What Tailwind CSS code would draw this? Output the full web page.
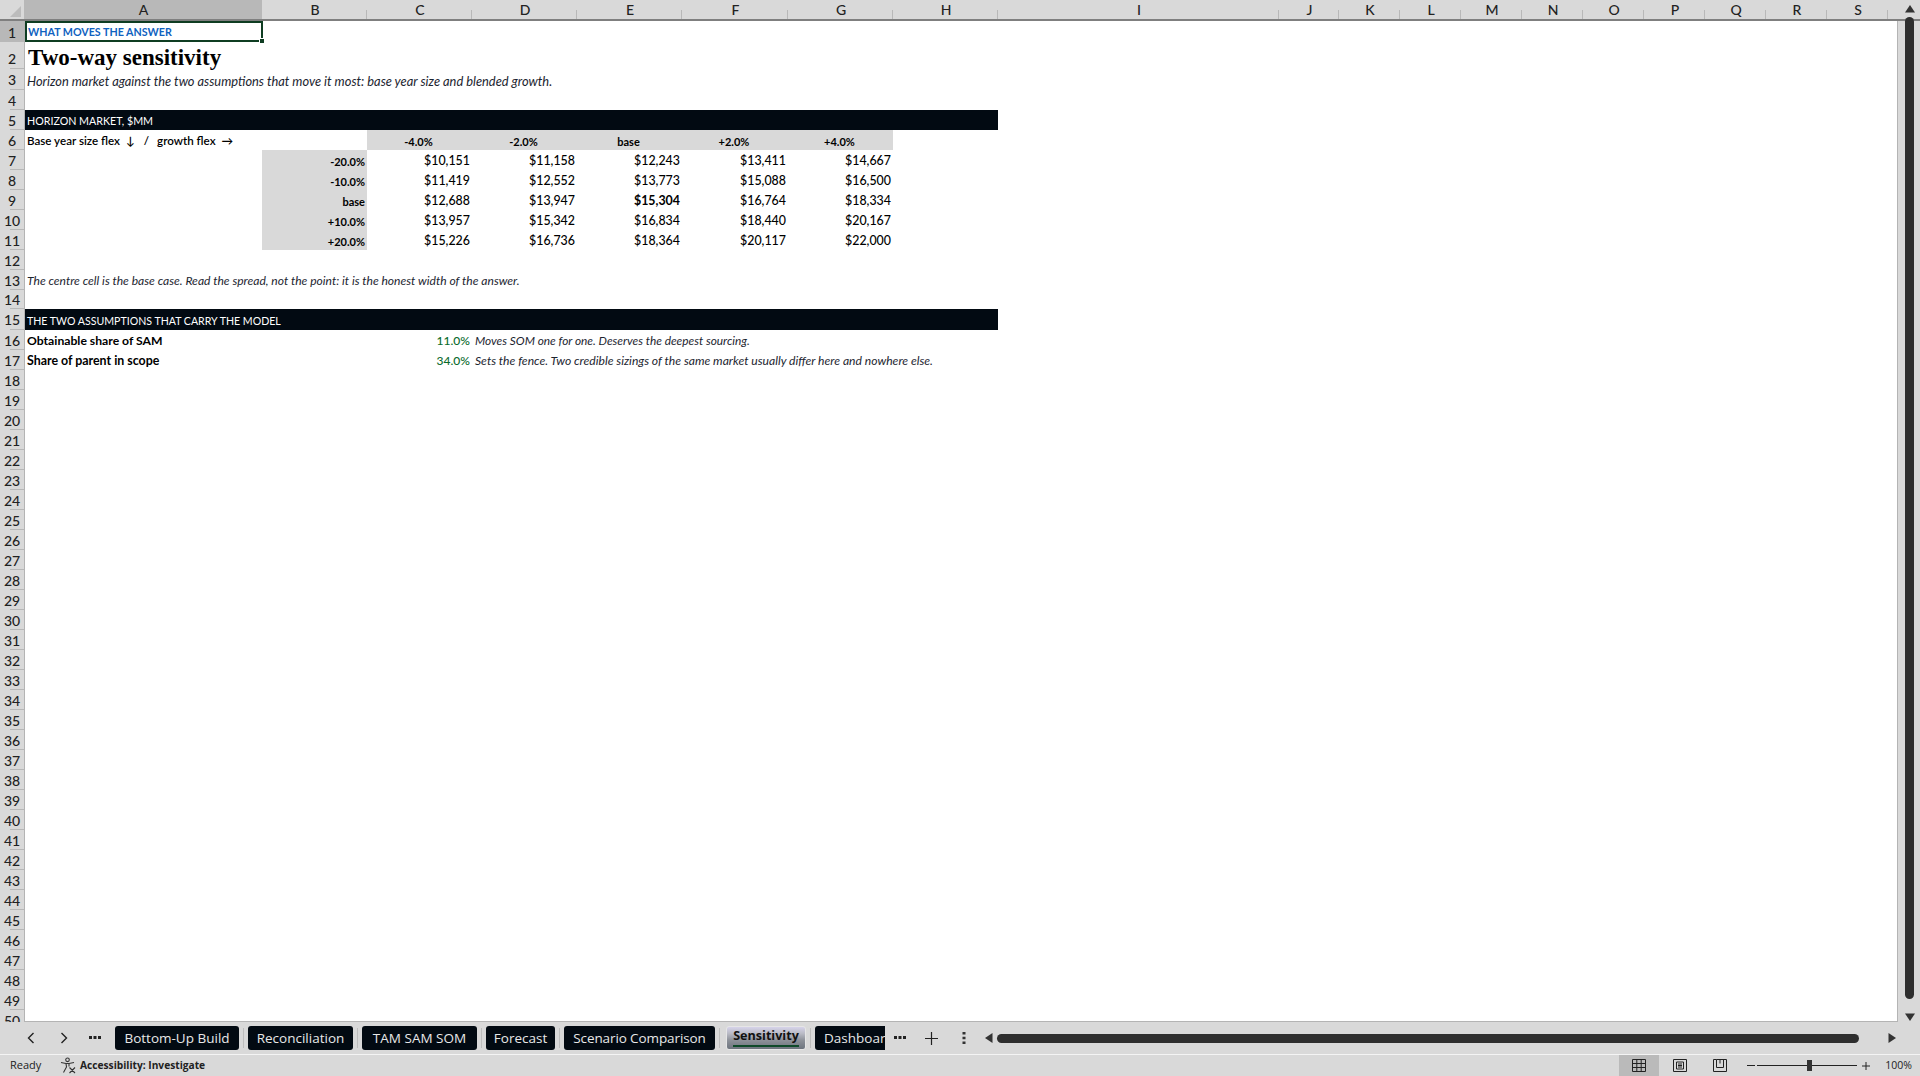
<!DOCTYPE html>
<html lang="en">
<head>
    <meta charset="UTF-8">
    <script src="https://cdn.jsdelivr.net/npm/@tailwindcss/browser@4"></script>
    <title>Sensitivity</title>
</head>
<body class="bg-[#d9d9d9] overflow-hidden">
<div class="flex flex-col h-[1076px] w-[1920px] font-['Lato','Liberation_Sans',sans-serif] text-black">

    <!-- column headers -->
    <div class="flex h-[21px] shrink-0 border-b-2 border-[#7f7f7f] text-[14px] font-medium text-[#222] [&>div]:flex [&>div]:items-center [&>div]:justify-center [&>div]:pl-[1px] [&>div]:bg-[linear-gradient(#b8b8b8,#b8b8b8)] [&>div]:bg-no-repeat [&>div]:bg-[length:1px_9px] [&>div]:bg-[position:right_bottom]">
        <div class="w-[24px] relative !bg-none">
            <svg class="absolute left-[9px] top-[5px]" width="13" height="13" viewBox="0 0 13 13"><path d="M12 1V12H1Z" fill="#bcbcbc"/></svg>
        </div>
        <div class="w-[238px] !bg-[#b8b8b8]">A</div>
        <div class="w-[105px]">B</div>
        <div class="w-[105px]">C</div>
        <div class="w-[105px]">D</div>
        <div class="w-[105px]">E</div>
        <div class="w-[106px]">F</div>
        <div class="w-[105px]">G</div>
        <div class="w-[105px]">H</div>
        <div class="w-[281px]">I</div>
        <div class="w-[60px]">J</div>
        <div class="w-[61px]">K</div>
        <div class="w-[61px]">L</div>
        <div class="w-[61px]">M</div>
        <div class="w-[61px]">N</div>
        <div class="w-[61px]">O</div>
        <div class="w-[61px]">P</div>
        <div class="w-[61px]">Q</div>
        <div class="w-[61px]">R</div>
        <div class="w-[61px]">S</div>
    </div>

    <div class="flex h-[1001px] shrink-0 overflow-hidden">
        <!-- row headers -->
        <div class="w-[24px] shrink-0 text-[14px] font-medium text-[#222] [&>div]:flex [&>div]:h-[20px] [&>div]:items-center [&>div]:justify-center [&>div]:bg-[linear-gradient(#b8b8b8,#b8b8b8)] [&>div]:bg-no-repeat [&>div]:bg-[length:14px_1px] [&>div]:bg-[position:right_bottom]">
            <div class="!h-[21px] !bg-[#b8b8b8] pt-[1px]">1</div>
            <div class="!h-[27px] pt-[6px]">2</div>
            <div class="!h-[21px]">3</div>
            <div>4</div>
            <div>5</div>
            <div>6</div><div>7</div><div>8</div><div>9</div><div>10</div>
            <div>11</div><div>12</div><div>13</div><div class="!h-[19px]">14</div><div class="!h-[21px]">15</div>
            <div>16</div><div>17</div><div>18</div><div>19</div><div>20</div>
            <div>21</div><div>22</div><div>23</div><div>24</div><div>25</div>
            <div>26</div><div>27</div><div>28</div><div>29</div><div>30</div>
            <div>31</div><div>32</div><div>33</div><div>34</div><div>35</div>
            <div>36</div><div>37</div><div>38</div><div>39</div><div>40</div>
            <div>41</div><div>42</div><div>43</div><div>44</div><div>45</div>
            <div>46</div><div>47</div><div>48</div><div>49</div><div>50</div>
        </div>

        <!-- sheet -->
        <div class="w-[1874px] shrink-0 bg-white border-l border-b border-r border-[#b4b4b4] text-[12.4px] leading-none whitespace-nowrap">
            <div class="relative h-[21px] w-[238px] border-2 border-[#0f3d22] flex items-center pl-[1px] pt-[2px] font-bold text-[10.7px] text-[#0f62c0]">
                WHAT MOVES THE ANSWER
                <div class="absolute right-[-4px] bottom-[-4px] size-[6px] bg-[#0f3d22] border border-white"></div>
            </div>
            <div class="h-[27px] flex items-center pl-[3px] pt-[3px] font-['Liberation_Serif',serif] font-bold text-[23px]">Two-way sensitivity</div>
            <div class="h-[21px] flex items-center pl-[2px] pt-[3px] italic text-[12.85px] text-[#1c2530]">Horizon market against the two assumptions that move it most: base year size and blended growth.</div>
            <div class="h-[20px]"></div>
            <div class="h-[20px] w-[973px] flex items-center pl-[2px] pt-[2px] bg-[#020a12] text-[10.7px] text-white">HORIZON MARKET, $MM</div>

            <div class="grid grid-cols-[237px_105px_105px_105px_105px_106px_105px] font-medium [&>div]:h-[20px] [&>div]:flex [&>div]:items-center [&>div]:justify-end [&>div]:pr-[2px] [&>div]:pt-[2px]">
                <div class="!justify-start pl-[2px] font-semibold text-[11.6px]">Base year size flex<span class="ml-[6px]">↓</span><span class="ml-[9px]">/</span><span class="ml-[8px]">growth flex</span><span class="ml-[6px]">→</span></div>
                <div></div>
                <div class="bg-[#d9d9d9] !justify-center font-bold text-[11px]">-4.0%</div>
                <div class="bg-[#d9d9d9] !justify-center font-bold text-[11px]">-2.0%</div>
                <div class="bg-[#d9d9d9] !justify-center font-bold text-[11px]">base</div>
                <div class="bg-[#d9d9d9] !justify-center font-bold text-[11px]">+2.0%</div>
                <div class="bg-[#d9d9d9] !justify-center font-bold text-[11px]">+4.0%</div>

                <div></div>
                <div class="bg-[#d9d9d9] font-bold text-[11px]">-20.0%</div>
                <div>$10,151</div><div>$11,158</div><div>$12,243</div><div>$13,411</div><div>$14,667</div>

                <div></div>
                <div class="bg-[#d9d9d9] font-bold text-[11px]">-10.0%</div>
                <div>$11,419</div><div>$12,552</div><div>$13,773</div><div>$15,088</div><div>$16,500</div>

                <div></div>
                <div class="bg-[#d9d9d9] font-bold text-[11px]">base</div>
                <div>$12,688</div><div>$13,947</div><div class="font-bold">$15,304</div><div>$16,764</div><div>$18,334</div>

                <div></div>
                <div class="bg-[#d9d9d9] font-bold text-[11px]">+10.0%</div>
                <div>$13,957</div><div>$15,342</div><div>$16,834</div><div>$18,440</div><div>$20,167</div>

                <div></div>
                <div class="bg-[#d9d9d9] font-bold text-[11px]">+20.0%</div>
                <div>$15,226</div><div>$16,736</div><div>$18,364</div><div>$20,117</div><div>$22,000</div>
            </div>

            <div class="h-[20px]"></div>
            <div class="h-[20px] flex items-center pl-[2px] pt-[2px] italic text-[12.07px] text-[#1c2530]">The centre cell is the base case. Read the spread, not the point: it is the honest width of the answer.</div>
            <div class="h-[19px]"></div>
            <div class="h-[21px] w-[973px] flex items-center pl-[2px] pt-[3px] bg-[#020a12] text-[10.6px] text-white">THE TWO ASSUMPTIONS THAT CARRY THE MODEL</div>

            <div class="grid grid-cols-[237px_105px_105px_1fr] [&>div]:h-[20px] [&>div]:flex [&>div]:items-center [&>div]:pt-[2px]">
                <div class="pl-[2px] font-bold text-[12.2px]">Obtainable share of SAM</div>
                <div></div>
                <div class="justify-end pr-[2px] text-[#0b6b2e] font-medium text-[12px]">11.0%</div>
                <div class="pl-[3px] italic text-[11.87px] text-[#1c2530]">Moves SOM one for one. Deserves the deepest sourcing.</div>

                <div class="pl-[2px] font-bold">Share of parent in scope</div>
                <div></div>
                <div class="justify-end pr-[2px] text-[#0b6b2e] font-medium text-[12px]">34.0%</div>
                <div class="pl-[3px] italic text-[12.14px] text-[#1c2530]">Sets the fence. Two credible sizings of the same market usually differ here and nowhere else.</div>
            </div>
        </div>

        <!-- vertical scrollbar -->
        <div class="flex-1 relative"></div>
    </div>

    <!-- sheet tabs -->
    <div class="flex h-[32px] shrink-0 items-center font-['Open_Sans','Liberation_Sans',sans-serif] text-[13.5px] text-[#e8e8e8] whitespace-nowrap">
        <div class="flex w-[115px] shrink-0 items-center text-[#222]">
            <svg class="ml-[26px]" width="10" height="12" viewBox="0 0 10 12"><path d="M7.5 1 2.5 6l5 5" fill="none" stroke="#222" stroke-width="1.4"/></svg>
            <svg class="ml-[23px]" width="10" height="12" viewBox="0 0 10 12"><path d="M2.5 1l5 5-5 5" fill="none" stroke="#222" stroke-width="1.4"/></svg>
            <svg class="ml-[20px]" width="12" height="4" viewBox="0 0 12 4"><path d="M0 0h3v3H0zM4.500 0h3v3h-3zM9 0h3v3H9z" fill="#222"/></svg>
        </div>
        <div class="flex w-[770px] shrink-0 items-center overflow-hidden [&>span]:h-[24px] [&>span]:flex [&>span]:items-center [&>span]:justify-center [&>span]:shrink-0 [&>span]:bg-[#020a12] [&>span]:rounded-[3px] [&>i]:w-[1px] [&>i]:h-[20px] [&>i]:mx-[4px] [&>i]:bg-[#bdbdbd] [&>i]:shrink-0">
            <span class="w-[124px]">Bottom-Up Build</span><i></i>
            <span class="w-[105px]">Reconciliation</span><i></i>
            <span class="w-[115px]">TAM SAM SOM</span><i></i>
            <span class="w-[69px]">Forecast</span><i></i>
            <span class="w-[151px] tracking-[-0.1px]">Scenario Comparison</span><i></i>
            <a class="relative ml-[2px] flex h-[24px] w-[80px] shrink-0 justify-center rounded-[3px] border border-[#e6e6e6] bg-[linear-gradient(#d6d3ea,#b9bac4_30%,#8d9199_60%,#6d747e)] text-[12.6px] leading-[18px] font-bold text-[#111]">Sensitivity<b class="absolute left-[6px] right-[6px] bottom-[2px] h-[2px] bg-[#0f4a2a]"></b></a><i></i>
            <span class="w-[96px] !justify-start pl-[9px] !rounded-r-none">Dashboard</span>
        </div>
        <svg class="ml-[9px]" width="12" height="4" viewBox="0 0 12 4"><path d="M0 0h3v3H0zM4.500 0h3v3h-3zM9 0h3v3H9z" fill="#222"/></svg>
        <svg class="ml-[19px]" width="13" height="13" viewBox="0 0 13 13"><path d="M6.500 0v13M0 6.500h13" stroke="#222" stroke-width="1.200"/></svg>
        <svg class="ml-[24px]" width="4" height="12" viewBox="0 0 4 12"><path d="M0.500 0h3v2.500h-3zM0.500 4.800h3v2.500h-3zM0.500 9.500h3V12h-3z" fill="#333"/></svg>
        <svg class="ml-[19px]" width="8" height="10" viewBox="0 0 8 10"><path d="M7.500 0v10L0 5Z" fill="#333"/></svg>
        <div class="ml-[4px] h-[9px] w-[862px] rounded-full bg-[#2e2e2e]"></div>
        <svg class="ml-[29px]" width="8" height="10" viewBox="0 0 8 10"><path d="M.5 0v10L8 5Z" fill="#333"/></svg>
    </div>

    <!-- status bar -->
    <div class="flex h-[22px] shrink-0 items-center border-t border-[#f4f4f4] text-[11.500px] text-[#222] whitespace-nowrap">
        <span class="ml-[10px] w-[50px] font-['Open_Sans',sans-serif] text-[11px]">Ready</span>
        <svg width="17" height="17" viewBox="0 0 17 17" fill="none" stroke="#333" stroke-width="1.1"><circle cx="7.500" cy="2.800" r="1.800"/><path d="M1 5.500 6 6.500h3l5-1M6 6.500 6.500 10 3.500 15.500M9 6.500v3M9.500 10.500l5.500 5.500M15 10.500 9.500 16"/></svg>
        <span class="ml-[3px] font-['Open_Sans',sans-serif] font-bold text-[10.2px]">Accessibility: Investigate</span>
        <div class="flex-1"></div>
        <div class="flex h-full w-[40px] items-center justify-center bg-[#bababa]">
            <svg width="14" height="13" viewBox="0 0 14 13" fill="none" stroke="#222"><path d="M.5.500h13v12H.5zM.5 4.500h13M.5 8.500h13M4.800.5v12M9.200.5v12"/></svg>
        </div>
        <div class="flex h-full w-[41px] items-center justify-center">
            <svg width="14" height="13" viewBox="0 0 14 13" fill="none" stroke="#222"><path d="M.5.500h13v12H.5zM3.500 3h7v7h-7zM5 5h4M5 6.500h4M5 8h4"/></svg>
        </div>
        <div class="flex h-full w-[40px] items-center justify-center">
            <svg width="14" height="13" viewBox="0 0 14 13" fill="none" stroke="#222"><path d="M3.500.500H13.500V12.500H.5V.5h3v8h7V.5M7 .5v4"/></svg>
        </div>
        <div class="ml-[7px] h-[1px] w-[8px] bg-[#222]"></div>
        <div class="relative ml-[2px] h-[1px] w-[100px] bg-[#222]">
            <div class="absolute left-[50px] top-[-5px] h-[11px] w-[5px] bg-[#333]"></div>
        </div>
        <svg class="ml-[5px]" width="8" height="8" viewBox="0 0 8 8"><path d="M4 0v8M0 4h8" stroke="#222"/></svg>
        <span class="ml-[15px] mr-[8px] font-['Open_Sans',sans-serif] text-[10.500px]">100%</span>
    </div>
</div>

<!-- scrollbar pieces sit over the gutter at the right of the sheet -->
<svg class="absolute left-[1905px] top-[5px]" width="10" height="8" viewBox="0 0 10 8"><path d="M5 0l5 7.500H0Z" fill="#333"/></svg>
<div class="absolute left-[1905px] top-[17px] h-[982px] w-[9px] rounded-full bg-[#2e2e2e]"></div>
<svg class="absolute left-[1905px] top-[1013px]" width="10" height="8" viewBox="0 0 10 8"><path d="M5 8 10 .5H0Z" fill="#333"/></svg>
</body>
</html>
